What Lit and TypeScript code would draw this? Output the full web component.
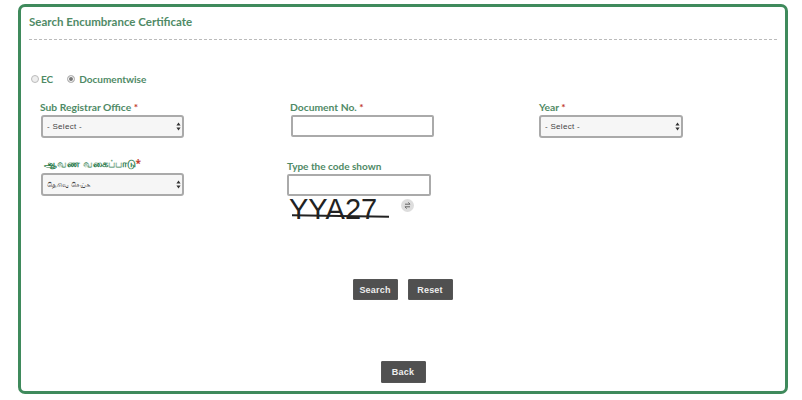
import { LitElement, html, css } from 'lit'
import { customElement } from 'lit/decorators.js'

const arrows = html`
  <svg class="arrows" width="5" height="9" viewBox="0 0 5 9">
    <path d="M2.5 0.5 L4.6 3.6 H0.4 Z M2.5 8.5 L4.6 5.4 H0.4 Z" fill="#333"></path>
  </svg>
`

@customElement('app-root')
export class AppRoot extends LitElement {
  static styles = css`
    :host {
      display: block;
      width: 802px;
      height: 400px;
      box-sizing: border-box;
      padding: 4px 14px 6px 18px;
      background: #fff;
      font-family: Lato, 'Open Sans', sans-serif;
    }

    .card {
      height: 100%;
      box-sizing: border-box;
      border: 3px solid #3f8a5c;
      border-radius: 7px;
      padding: 6px 8px 0 8px;
      display: flex;
      flex-direction: column;
    }

    .title {
      font-size: 11.5px;
      font-weight: 700;
      line-height: 18px;
      color: #4f8a66;
      padding-bottom: 8px;
      border-bottom: 1px dashed #bbb;
    }

    .radios {
      display: flex;
      align-items: center;
      margin-top: 31px;
      height: 16px;
      font-size: 10px;
      font-weight: 700;
      color: #4f8a66;
    }

    .radio {
      width: 6px;
      height: 6px;
      border-radius: 50%;
      border: 1px solid #bbb;
      background: #eee;
      margin: 0 2px 0 2px;
      box-sizing: content-box;
    }

    .radio.on {
      background: #777;
      box-shadow: inset 0 0 0 1px #fff;
      margin-left: 14px;
      margin-right: 4px;
    }

    .grid {
      display: grid;
      grid-template-columns: 250px 249px 1fr;
      margin: 12px 0 0 11px;
    }

    .field label {
      display: block;
      height: 16px;
      line-height: 16px;
      font-size: 10.3px;
      font-weight: 700;
      color: #4f8a66;
      white-space: nowrap;
    }

    .req {
      color: #c0392b;
    }

    .select {
      position: relative;
      width: 143px;
      margin-left: 1px;
    }

    .select.year {
      width: 144px;
      margin-left: 0;
    }

    .select select {
      display: block;
      width: 100%;
      height: 23px;
      box-sizing: border-box;
      appearance: none;
      border: 2px solid #aaa;
      border-radius: 3px;
      background: #f6f6f6;
      padding: 0 4px;
      font-family: 'Liberation Sans', sans-serif;
      font-size: 8px;
      letter-spacing: 0.3px;
      color: #444;
    }

    .select select.small {
      font-family: 'Noto Sans', 'DejaVu Sans', sans-serif;
      font-size: 6.5px;
      letter-spacing: 0;
    }

    .arrows {
      position: absolute;
      right: 3px;
      top: 7px;
    }

    .input {
      display: block;
      width: 143px;
      height: 22px;
      box-sizing: border-box;
      border: 2px solid #aaa;
      border-radius: 2px;
      background: #fff;
      margin-left: 1px;
    }

    .row2 {
      margin-top: 17px;
    }

    .field .tamil {
      padding-left: 4px;
      font-family: 'Noto Sans', 'DejaVu Sans', sans-serif;
      font-size: 10px;
      height: 18px;
      color: #2e7d4f;
    }

    .row2.code {
      margin-left: -3px;
      margin-top: 20px;
    }

    .code label {
      height: 16px;
      font-size: 10px;
    }

    .code .input {
      width: 144px;
      margin-left: 0;
    }

    .captcha {
      display: flex;
      align-items: flex-start;
      margin-left: 2px;
    }

    .captcha-text {
      position: relative;
      width: 112px;
      font-family: 'Liberation Sans', sans-serif;
      font-size: 29px;
      line-height: 26px;
      height: 26px;
      color: #222;
    }

    .captcha-text::after {
      content: '';
      position: absolute;
      left: 3px;
      top: 19px;
      width: 97px;
      height: 1.5px;
      background: #222;
      transform: rotate(1deg);
    }

    .refresh {
      width: 13px;
      height: 13px;
      border-radius: 50%;
      background: #ddd;
      margin-top: 3px;
      display: flex;
      align-items: center;
      justify-content: center;
    }

    .actions {
      display: flex;
      justify-content: center;
      gap: 10px;
      margin-top: 57px;
      margin-left: -1px;
    }

    .actions.back {
      margin-top: 61px;
      margin-left: 0;
    }

    button {
      height: 21px;
      width: 45px;
      padding: 0;
      border: 1px solid #555;
      border-radius: 1px;
      background: #505050;
      color: #eee;
      font-family: 'Liberation Sans', sans-serif;
      font-size: 9px;
      font-weight: 700;
      letter-spacing: 0.2px;
    }

    .back button {
      height: 22px;
    }
  `

  render() {
    return html`
      <div class="card">
        <div class="title">Search Encumbrance Certificate</div>

        <div class="radios">
          <span class="radio"></span>EC
          <span class="radio on"></span>Documentwise
        </div>

        <div class="grid">
          <div class="field">
            <label>Sub Registrar Office <span class="req">*</span></label>
            <div class="select">
              <select><option>- Select -</option></select>
              ${arrows}
            </div>
          </div>
          <div class="field">
            <label>Document No. <span class="req">*</span></label>
            <input class="input" type="text" />
          </div>
          <div class="field">
            <label>Year <span class="req">*</span></label>
            <div class="select year">
              <select><option>- Select -</option></select>
              ${arrows}
            </div>
          </div>

          <div class="field row2">
            <label class="tamil">ஆவண வகைப்பாடு<span class="req">*</span></label>
            <div class="select">
              <select class="small"><option>தெரிவு செய்க</option></select>
              ${arrows}
            </div>
          </div>
          <div class="field row2 code">
            <label>Type the code shown</label>
            <input class="input" type="text" />
            <div class="captcha">
              <div class="captcha-text">YYA27</div>
              <div class="refresh">
                <svg width="7" height="9" viewBox="0 0 7 9">
                  <path d="M1 3.2 H6 L4.4 1.4 M6 5.8 H1 L2.6 7.6" fill="none" stroke="#666" stroke-width="1"></path>
                </svg>
              </div>
            </div>
          </div>
        </div>

        <div class="actions">
          <button>Search</button>
          <button>Reset</button>
        </div>
        <div class="actions back">
          <button>Back</button>
        </div>
      </div>
    `
  }
}
